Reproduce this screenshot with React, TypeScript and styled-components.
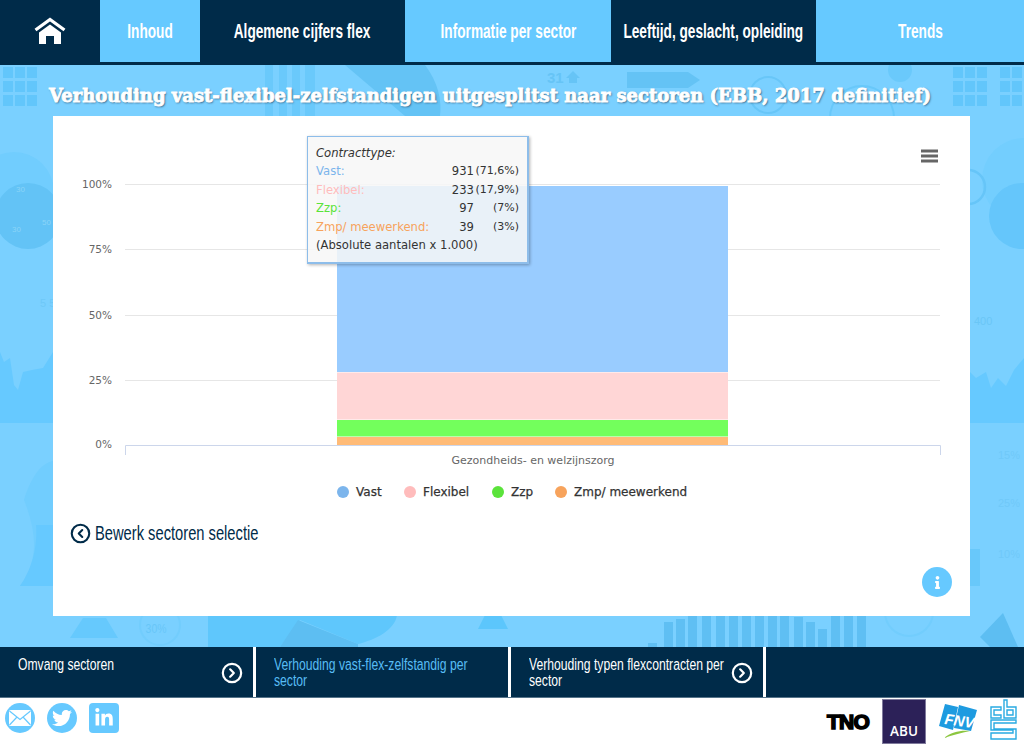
import * as React from "react";
import styled, { createGlobalStyle } from "styled-components";
import { CircleChevronLeft, CircleChevronRight } from "lucide-react";
import { FaInfo, FaLinkedinIn, FaTwitter } from "react-icons/fa";

const NAVY = "#002b49";
const SKY = "#66c9ff";
const NARROW = `"Liberation Sans", sans-serif`;
const CHART_FONT = `"DejaVu Sans", sans-serif`;

const GlobalStyle = createGlobalStyle`
  html, body {
    margin: 0;
    padding: 0;
    background: #fff;
  }
  * {
    box-sizing: border-box;
  }
`;

const Page = styled.div`
  width: 1024px;
  height: 756px;
  overflow: hidden;
  display: flex;
  flex-direction: column;
  background: #fff;
`;

const Nav = styled.nav`
  height: 65px;
  flex-shrink: 0;
  display: grid;
  grid-template-columns: 100px 100px 205px 206px 205px 1fr;
  padding-bottom: 3px;
  background: ${NAVY};
`;

const NavCell = styled.a<{ light?: boolean }>`
  display: flex;
  align-items: center;
  justify-content: center;
  min-width: 0;
  background: ${props => (props.light ? SKY : NAVY)};
`;

// no condensed face is installed, so the labels are squeezed horizontally
const NavLabel = styled.span`
  flex: 0 0 1px;
  display: flex;
  justify-content: center;
  transform: scaleX(0.65);
  color: #fff;
  font-family: ${NARROW};
  font-size: 21px;
  font-weight: bold;
  white-space: nowrap;
`;

const Stage = styled.main`
  position: relative;
  height: 582px;
  flex-shrink: 0;
  overflow: hidden;
  background: #7ad0ff;
  padding: 0 54px 31px 53px;
  display: flex;
  flex-direction: column;
`;

const Backdrop = styled.svg`
  position: absolute;
  inset: 0;
  width: 100%;
  height: 100%;
`;

const Title = styled.h1`
  position: relative;
  height: 51px;
  margin: 0 -20px 0 -4px;
  padding-top: 20px;
  flex-shrink: 0;
  color: #fff;
  font-family: "DejaVu Serif", serif;
  font-size: 18px;
  line-height: 22px;
  font-weight: bold;
  white-space: nowrap;
  -webkit-text-stroke: 0.8px #fff;
  text-shadow: 1px 1px 2px rgba(20, 50, 80, 0.75);
`;

const Panel = styled.section`
  position: relative;
  flex: 1;
  background: #fff;
`;

const Chart = styled.svg`
  display: block;
  width: 917px;
  height: 396px;
  font-family: ${CHART_FONT};
`;

const Tooltip = styled.div`
  position: absolute;
  left: 254px;
  top: 20px;
  width: 222px;
  height: 128px;
  padding: 7px 8px 0 8px;
  background: rgba(247, 247, 247, 0.85);
  border: 2px solid #8dbdea;
  border-top-width: 1px;
  border-left-width: 1px;
  box-shadow: 1px 1px 3px rgba(0, 0, 0, 0.3);
  font-family: ${CHART_FONT};
  font-size: 11.6px;
  line-height: 18.4px;
  color: #333;
`;

const TooltipHead = styled.div`
  font-style: italic;
`;

const TooltipRow = styled.div`
  display: grid;
  grid-template-columns: 1fr 42px 45px;
`;

const SeriesName = styled.span<{ color: string }>`
  color: ${props => props.color};
  white-space: nowrap;
`;

const Amount = styled.span`
  text-align: right;
`;

const Share = styled.span`
  text-align: right;
  font-size: 11px;
`;

const BackLink = styled.a`
  display: inline-flex;
  align-items: center;
  gap: 4px;
  margin: 8px 0 0 17px;
  color: ${NAVY};
`;

const BackLabel = styled.span`
  width: 163px;
  transform: scaleX(0.7);
  transform-origin: left center;
  font-family: ${NARROW};
  font-size: 21px;
  line-height: 26px;
  white-space: nowrap;
`;

const InfoButton = styled.button`
  position: absolute;
  right: 18px;
  bottom: 19px;
  width: 30px;
  height: 30px;
  padding: 0;
  border: 0;
  border-radius: 50%;
  display: flex;
  align-items: center;
  justify-content: center;
  background: ${SKY};
  color: #fff;
  font-size: 13px;
`;

const SubNav = styled.div`
  height: 51px;
  flex-shrink: 0;
  display: grid;
  grid-template-columns: 253px 252px 252px 1fr;
  column-gap: 3px;
  background: #fff;
  border-bottom: 1px solid #56748a;
`;

const SubItem = styled.a<{ active?: boolean }>`
  display: flex;
  justify-content: space-between;
  padding: 9px 10px 0 18px;
  background: ${NAVY};
  color: ${props => (props.active ? "#58bdf5" : "#fff")};

  & > svg {
    flex-shrink: 0;
    margin-top: 6px;
  }
`;

const SubLabel = styled.span`
  width: 288px;
  margin-right: -86px;
  flex: none;
  transform: scaleX(0.7);
  transform-origin: left top;
  font-family: ${NARROW};
  font-size: 17.4px;
  line-height: 16px;
`;

const Footer = styled.footer`
  flex: 1;
  display: flex;
  justify-content: space-between;
  padding: 1px 7px 0 5px;
`;

const Social = styled.div`
  display: flex;
  gap: 12px;
  padding-top: 4px;
`;

const SocialIcon = styled.a<{ square?: boolean }>`
  width: 30px;
  height: 30px;
  display: flex;
  align-items: center;
  justify-content: center;
  background: ${SKY};
  border-radius: ${props => (props.square ? "4px" : "50%")};
  color: #fff;
  font-size: 20px;
`;

const Logos = styled.div`
  display: flex;
  align-items: flex-start;
  gap: 13px;
`;

const TnoLogo = styled.span`
  margin-top: 12px;
  color: #000;
  font-family: "Liberation Sans", sans-serif;
  font-size: 21px;
  line-height: 22px;
  font-weight: bold;
  letter-spacing: -0.8px;
  -webkit-text-stroke: 1.6px #000;
`;

const AbuLogo = styled.span`
  width: 44px;
  height: 45px;
  display: flex;
  align-items: flex-end;
  justify-content: center;
  padding-bottom: 4px;
  background: #2c2158;
  border: 1px solid #7f7a9c;
  color: #fff;
  font-family: "Open Sans", sans-serif;
  font-size: 13.5px;
  line-height: 16px;
  font-weight: 600;
`;

const LogoSvg = styled.svg`
  display: block;
`;

const rows = [
  { name: "Vast", color: "#7cb5ec", amount: 931, share: "(71,6%)" },
  { name: "Flexibel", color: "#ffbcbc", amount: 233, share: "(17,9%)" },
  { name: "Zzp", color: "#5be33b", amount: 97, share: "(7%)" },
  { name: "Zmp/ meewerkend", color: "#f7a35c", amount: 39, share: "(3%)" }
];

const ticks = [
  { label: "100%", y: 184.5 },
  { label: "75%", y: 249.5 },
  { label: "50%", y: 315.5 },
  { label: "25%", y: 380.5 }
];

const segments = [
  { y: 186, height: 186, fill: "#99ccff" },
  { y: 372.5, height: 47, fill: "#ffd6d6" },
  { y: 420, height: 16.5, fill: "#73ff5c" },
  { y: 437, height: 8, fill: "#ffbb77" }
];

const legend = [
  { x: 343, text: "Vast", color: "#7cb5ec" },
  { x: 410, text: "Flexibel", color: "#ffbcbc" },
  { x: 498, text: "Zzp", color: "#5be33b" },
  { x: 561, text: "Zmp/ meewerkend", color: "#f7a35c" }
];

function BackdropArt() {
  const squares: [number, number][] = [];
  [3, 15, 27].forEach(x =>
    [67, 81, 95].forEach(y => squares.push([x, y]))
  );
  [953, 965, 977, 1000, 1012].forEach(x =>
    [67, 81, 95].forEach(y => squares.push([x, y]))
  );
  const bars = [
    [648, 4], [664, 25], [676, 28], [688, 32], [702, 32], [716, 32], [729, 32],
    [742, 32], [755, 32], [768, 32], [780, 32], [794, 30], [806, 25], [818, 18],
    [831, 32], [844, 32], [857, 32]
  ];

  return (
    <Backdrop viewBox="0 65 1024 582" preserveAspectRatio="none" aria-hidden>
      {squares.map(([x, y]) => (
        <rect key={`${x}-${y}`} x={x} y={y} width="10" height="11" fill="#62c6fb" />
      ))}
      <circle cx="14" cy="192" r="40" fill="#71cdfe" />
      <circle cx="28" cy="216" r="33" fill="#63c3f6" />
      <text x="16" y="192" fontFamily="Liberation Sans, sans-serif" fontSize="8" fill="#8ad4f8">30</text>
      <text x="42" y="225" fontFamily="Liberation Sans, sans-serif" fontSize="8" fill="#8ad4f8">50</text>
      <text x="12" y="232" fontFamily="Liberation Sans, sans-serif" fontSize="8" fill="#8ad4f8">30</text>
      <path d="M0 352 L4 362 L10 358 L14 385 L18 390 L23 372 L32 370 L43 368 L53 352 V423 H0 Z" fill="#66c9ff" />
      <path d="M970 372 L976 378 L986 372 L991 388 L998 378 L1006 386 L1014 370 L1024 358 V423 H970 Z" fill="#66c9ff" />
      <path d="M24 500 C30 480 40 463 53 461 V586 H20 C40 560 36 530 24 500 Z" fill="#71cdfe" />
      <path d="M36 525 C38 550 30 572 20 586 H53 V525 Z" fill="#66c9ff" />
      <text x="40" y="307" fontFamily="Liberation Sans, sans-serif" fontSize="11" fill="#6ec8f8">5 5</text>
      <circle cx="1024" cy="180" r="42" fill="#73cefe" />
      <circle cx="1022" cy="216" r="33" fill="#65c6fb" />
      <circle cx="968" cy="187" r="17" fill="none" stroke="#66c5f8" strokeWidth="2.5" />
      <rect x="265" y="65" width="8" height="51" fill="#6ac9fb" />
      <rect x="279" y="65" width="8" height="51" fill="#6ac9fb" />
      <rect x="292" y="65" width="8" height="51" fill="#6ac9fb" />
      <rect x="305" y="65" width="10" height="51" fill="#6ac9fb" />
      <path d="M345 65 H425 C438 82 442 100 440 116 H405 Z" fill="#64c3f5" />
      <text x="547" y="83" fontFamily="Liberation Sans, sans-serif" fontSize="15" fontWeight="bold" fill="#66c4f6">31</text>
      <path d="M566 78 L573 71 L580 78 H577 V83 H569 V78 Z" fill="#66c4f6" />
      <path d="M627 72 H688 L700 80 L688 88 H627 Z" fill="#64c3f5" />
      <circle cx="768" cy="95" r="18" fill="none" stroke="#68c6f8" strokeWidth="2" />
      <circle cx="862" cy="118" r="32" fill="none" stroke="#68c8fa" strokeWidth="2" />
      <circle cx="900" cy="70" r="12" fill="#6ac9fb" />
      <path d="M70 638 L83 618 H106 L118 638 Z" fill="#66c9fd" />
      <text x="146" y="633" fontFamily="Liberation Sans, sans-serif" fontSize="13" fill="#68c6f8" transform="scale(0.8 1) translate(36 0)">30%</text>
      <circle cx="160" cy="625" r="20" fill="none" stroke="#72cdfd" strokeWidth="2" />
      <path d="M208 615 H397 C395 630 375 640 358 644 L300 620 L280 647 H208 Z" fill="#5fc7fc" />
      <path d="M280 647 L298 620 L358 644 L358 647 Z" fill="#5dbef2" />
      <path d="M478 629 L485 615 H501 L508 629 Z" fill="#5cc6fc" />
      {bars.map(([x, h]) => (
        <rect key={x} x={x} y={647 - h} width="9" height={h} fill="#5fbff3" />
      ))}
      <circle cx="909" cy="612" r="24" fill="none" stroke="#72cdfd" strokeWidth="2" />
      <path d="M980 637 L1003 613 L1018 647 H990 Z" fill="#5dbef2" />
      <path d="M970 549 H980 V586 H970 Z" fill="#68c8fa" />
      <text x="974" y="325" fontFamily="Liberation Sans, sans-serif" fontSize="11" fill="#6ac6f6">400</text>
      <text x="998" y="459" fontFamily="Liberation Sans, sans-serif" fontSize="11" fill="#70c9f9">15%</text>
      <text x="998" y="507" fontFamily="Liberation Sans, sans-serif" fontSize="11" fill="#70c9f9">25%</text>
      <text x="998" y="558" fontFamily="Liberation Sans, sans-serif" fontSize="11" fill="#70c9f9">10%</text>
    </Backdrop>
  );
}

function ChartArea() {
  return (
    <Chart viewBox="53 116 917 396">
      {ticks.map(tick => (
        <g key={tick.label}>
          <line x1="125" x2="940" y1={tick.y} y2={tick.y} stroke="#e6e6e6" />
          <text x="112" y={tick.y + 3} textAnchor="end" fontSize="10.5" fill="#666">
            {tick.label}
          </text>
        </g>
      ))}
      <text x="112" y="448" textAnchor="end" fontSize="10.5" fill="#666">
        0%
      </text>
      <path d="M125.5 455 V445.5 H940.5 V455" fill="none" stroke="#ccd6eb" />
      {segments.map(segment => (
        <rect key={segment.y} x="337" width="391" y={segment.y} height={segment.height} fill={segment.fill} />
      ))}
      <text x="533" y="464" textAnchor="middle" fontSize="11" fill="#666">
        Gezondheids- en welzijnszorg
      </text>
      {legend.map(item => (
        <g key={item.text}>
          <circle cx={item.x} cy="492" r="6" fill={item.color} />
          <text x={item.x + 13} y="496" fontSize="12" fill="#333" stroke="#333" strokeWidth="0.25">
            {item.text}
          </text>
        </g>
      ))}
      <path d="M921 151 H938 M921 156 H938 M921 161 H938" stroke="#666" strokeWidth="3" />
    </Chart>
  );
}

function HomeIcon() {
  return (
    <svg width="32" height="28" viewBox="0 0 32 28" aria-hidden>
      <path d="M1.5 13 L16 2.5 L30.5 13" fill="none" stroke="#fff" strokeWidth="3.2" />
      <path d="M16 7.5 L27 15.5 V27 H20 V19 H12 V27 H5 V15.5 Z" fill="#fff" />
    </svg>
  );
}

function MailIcon() {
  return (
    <svg width="22" height="16" viewBox="0 0 22 16" aria-hidden>
      <rect width="22" height="16" rx="1.5" fill="#fff" />
      <path d="M0.5 1 L11 9.5 L21.5 1 M0.5 15 L8 7 M21.5 15 L14 7" fill="none" stroke={SKY} strokeWidth="1.2" />
    </svg>
  );
}

function FnvLogo() {
  return (
    <LogoSvg width="38" height="41" viewBox="0 0 38 41" aria-hidden>
      <path d="M6 5 L19 8 L14 31 L0 27 Z" fill="#1e9be0" />
      <path d="M20 6 L38 11 L32 32 L15 29 Z" fill="#1e9be0" />
      <text x="5" y="25" fontFamily="Liberation Sans, sans-serif" fontSize="15" fontWeight="bold" fontStyle="italic" fill="#fff" transform="rotate(8 5 25)">
        FNV
      </text>
      <path d="M5 39 C12 33 22 31 31 32 C22 34 13 36 5 39 Z" fill="#8cc63f" />
    </LogoSvg>
  );
}

function CbsLogo() {
  return (
    <LogoSvg width="27" height="41" viewBox="0 0 27 41" aria-hidden>
      <path
        d="M11 8 H1 V19 H11 V16 H4 V11 H11 Z M14 1 H17 V8 H26 V19 H14 Z M17 11 V16 H23 V11 Z M26 21 H1 V31 H23 V34 H1 V40 H26 V30 H4 V24 H26 Z"
        fill="none"
        stroke="#29abe2"
        strokeWidth="1.4"
      />
    </LogoSvg>
  );
}

export default function App() {
  return (
    <Page>
      <GlobalStyle />
      <Nav>
        <NavCell>
          <HomeIcon />
        </NavCell>
        <NavCell light>
          <NavLabel>Inhoud</NavLabel>
        </NavCell>
        <NavCell>
          <NavLabel>Algemene cijfers flex</NavLabel>
        </NavCell>
        <NavCell light>
          <NavLabel>Informatie per sector</NavLabel>
        </NavCell>
        <NavCell>
          <NavLabel>Leeftijd, geslacht, opleiding</NavLabel>
        </NavCell>
        <NavCell light>
          <NavLabel>Trends</NavLabel>
        </NavCell>
      </Nav>
      <Stage>
        <BackdropArt />
        <Title>Verhouding vast-flexibel-zelfstandigen uitgesplitst naar sectoren (EBB, 2017 definitief)</Title>
        <Panel>
          <ChartArea />
          <Tooltip>
            <TooltipHead>Contracttype:</TooltipHead>
            {rows.map(row => (
              <TooltipRow key={row.name}>
                <SeriesName color={row.color}>{row.name}:</SeriesName>
                <Amount>{row.amount}</Amount>
                <Share>{row.share}</Share>
              </TooltipRow>
            ))}
            <div>(Absolute aantalen x 1.000)</div>
          </Tooltip>
          <BackLink>
            <CircleChevronLeft size={21} strokeWidth={2.4} />
            <BackLabel>Bewerk sectoren selectie</BackLabel>
          </BackLink>
          <InfoButton aria-label="Info">
            <FaInfo />
          </InfoButton>
        </Panel>
      </Stage>
      <SubNav>
        <SubItem>
          <SubLabel>Omvang sectoren</SubLabel>
          <CircleChevronRight size={22} strokeWidth={2.4} />
        </SubItem>
        <SubItem active>
          <SubLabel>Verhouding vast-flex-zelfstandig per sector</SubLabel>
        </SubItem>
        <SubItem>
          <SubLabel>Verhouding typen flexcontracten per sector</SubLabel>
          <CircleChevronRight size={22} strokeWidth={2.4} />
        </SubItem>
        <SubItem />
      </SubNav>
      <Footer>
        <Social>
          <SocialIcon>
            <MailIcon />
          </SocialIcon>
          <SocialIcon>
            <FaTwitter />
          </SocialIcon>
          <SocialIcon square>
            <FaLinkedinIn />
          </SocialIcon>
        </Social>
        <Logos>
          <TnoLogo>TNO</TnoLogo>
          <AbuLogo>ABU</AbuLogo>
          <FnvLogo />
          <CbsLogo />
        </Logos>
      </Footer>
    </Page>
  );
}
